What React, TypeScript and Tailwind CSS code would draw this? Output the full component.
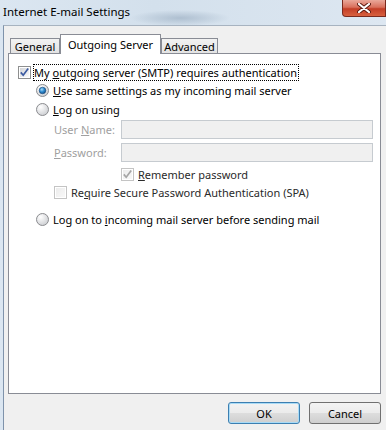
import React from "react";

function CheckBox({ checked, disabled }: { checked?: boolean; disabled?: boolean }) {
  const edge = disabled ? "#c4c4c4" : "#8e8f8f";
  const mark = disabled ? "#a5a5a5" : "#3b5aa0";
  return (
    <svg width="13" height="13" viewBox="0 0 13 13" className="shrink-0">
      <defs>
        <linearGradient id={disabled ? "cbd" : "cbn"} x1="0" y1="0" x2="1" y2="1">
          <stop offset="0" stopColor={disabled ? "#ececec" : "#d2d4d8"} />
          <stop offset="1" stopColor={disabled ? "#f8f8f8" : "#fbfbfb"} />
        </linearGradient>
      </defs>
      <rect x="0.5" y="0.5" width="12" height="12" fill="#fff" stroke={edge} />
      <rect x="2" y="2" width="9" height="9" fill={`url(#${disabled ? "cbd" : "cbn"})`} />
      {checked && (
        <path d="M2.8 6.4 L5.2 9.2 L10.2 2.6" fill="none" stroke={mark} strokeWidth="1.7" />
      )}
    </svg>
  );
}

function Radio({ checked }: { checked?: boolean }) {
  return (
    <svg width="13" height="13" viewBox="0 0 13 13" className="shrink-0">
      <defs>
        <radialGradient id="rb" cx="0.35" cy="0.3" r="0.8">
          <stop offset="0" stopColor="#ffffff" />
          <stop offset="1" stopColor="#c9cbcf" />
        </radialGradient>
        <radialGradient id="rd" cx="0.4" cy="0.35" r="0.7">
          <stop offset="0" stopColor="#a9dcf8" />
          <stop offset="0.5" stopColor="#2f8bd0" />
          <stop offset="1" stopColor="#124f86" />
        </radialGradient>
      </defs>
      <circle cx="6.5" cy="6.5" r="6" fill="url(#rb)" stroke="#8b8c8f" />
      {checked && <circle cx="6.5" cy="6.5" r="3.3" fill="url(#rd)" stroke="#14477a" strokeWidth="0.6" />}
    </svg>
  );
}

function Btn({ label, focus }: { label: string; focus?: boolean }) {
  return (
    <div
      className={`w-[72px] h-[22px] rounded-[3px] border flex items-center justify-center text-black bg-[linear-gradient(#f3f3f3,#ebebeb_50%,#dddddd_51%,#cfcfcf)] ${
        focus ? "border-[#3c7fb1] shadow-[inset_0_0_0_1px_#a9dbf6]" : "border-[#707070]"
      }`}
    >
      {label}
    </div>
  );
}

export default function App() {
  const muted = "text-[#a0a0a0]";
  return (
    <div
      className="w-[386px] h-[430px] overflow-hidden flex flex-col text-[11px] leading-none text-black bg-[linear-gradient(90deg,#dbe6f1,#d3e0ec_40%,#dde7f1)]"
      style={{ fontFamily: '"Noto Sans", "Open Sans", sans-serif' }}
    >
      <div className="h-[25px] flex items-start justify-between bg-[radial-gradient(ellipse_50px_8px_at_180px_18px,#aebfd0,transparent)]">
        <span className="pl-[3px] pt-[6px] text-[11.5px] text-black">Internet E-mail Settings</span>
        <div className="w-[44px] h-[17px] rounded-bl-[4px] border border-t-0 border-[#7a2a1e] bg-[linear-gradient(#eaa89a,#d9705c_45%,#c33e27_55%,#d8613f)] flex items-center justify-center">
          <svg width="14" height="10" viewBox="0 0 14 10">
            <path d="M2 1 L12 9 M12 1 L2 9" stroke="#5b1a10" strokeWidth="4" strokeLinecap="round" />
            <path d="M2 1 L12 9 M12 1 L2 9" stroke="#ffffff" strokeWidth="2.2" strokeLinecap="round" />
          </svg>
        </div>
      </div>

      <div className="flex-1 ml-[3px] border-l border-t border-l-[#7f93ab] border-t-[#a7b3c0] bg-[#f0f0f0] flex flex-col">
        <div className="ml-[4px] mt-[8px] flex items-end pl-[2px] h-[20px] relative z-10 -mb-px">
          <div className="w-[50px] h-[16px] border border-[#898c95] bg-[linear-gradient(#f2f2f2,#e3e3e3)] flex items-center justify-center">
            General
          </div>
          <div className="w-[101px] h-[20px] border border-b-0 border-[#898c95] bg-white flex items-start justify-center pt-[4px]">
            Outgoing Server
          </div>
          <div className="w-[57px] h-[16px] border border-[#898c95] bg-[linear-gradient(#f2f2f2,#e3e3e3)] flex items-center justify-center">
            Advanced
          </div>
        </div>

        <div className="ml-[4px] w-[373px] h-[341px] border border-[#898c95] bg-white flex flex-col">
          <div className="mt-[10px] h-[17px] flex items-center pl-[9px]">
            <CheckBox checked />
            <span className="ml-[2px] px-[1px] h-[17px] flex items-center outline-1 outline-dotted outline-black -outline-offset-1 pr-[2px]">
              My <span className="underline mx-[3px]">o</span>
              <span className="-ml-[3px]">utgoing server (SMTP) requires authentication</span>
            </span>
          </div>

          <div className="mt-[1px] h-[17px] flex items-center pl-[27px] gap-[4px]">
            <Radio checked />
            <span>
              <span className="underline">U</span>se same settings as my incoming mail server
            </span>
          </div>

          <div className="mt-[2px] h-[17px] flex items-center pl-[27px] gap-[4px]">
            <Radio />
            <span>
              <span className="underline">L</span>og on using
            </span>
          </div>

          <div className="mt-[2px] h-[19px] flex items-center pl-[45px]">
            <span className={`w-[67px] ${muted}`}>
              User <span className="underline">N</span>ame:
            </span>
            <div className="w-[252px] h-[19px] border border-[#c6cbd0] bg-[#f0f0f0]" />
          </div>

          <div className="mt-[4px] h-[19px] flex items-center pl-[45px]">
            <span className={`w-[67px] ${muted}`}>
              <span className="underline">P</span>assword:
            </span>
            <div className="w-[252px] h-[19px] border border-[#c6cbd0] bg-[#f0f0f0]" />
          </div>

          <div className="mt-[4px] h-[17px] flex items-center pl-[112px] gap-[4px]">
            <CheckBox checked disabled />
            <span className="text-[#2a2a2a]">
              <span className="underline">R</span>emember password
            </span>
          </div>

          <div className="mt-[1px] h-[17px] flex items-center pl-[45px] gap-[4px]">
            <CheckBox disabled />
            <span className="text-[#2a2a2a]">
              Re<span className="underline">q</span>uire Secure Password Authentication (SPA)
            </span>
          </div>

          <div className="mt-[10px] h-[17px] flex items-center pl-[27px] gap-[4px]">
            <Radio />
            <span>
              Log on to <span className="underline">i</span>ncoming mail server before sending mail
            </span>
          </div>
        </div>

        <div className="mt-[8px] ml-[4px] w-[373px] flex justify-end gap-[9px]">
          <Btn label="OK" focus />
          <Btn label="Cancel" />
        </div>
      </div>
    </div>
  );
}
